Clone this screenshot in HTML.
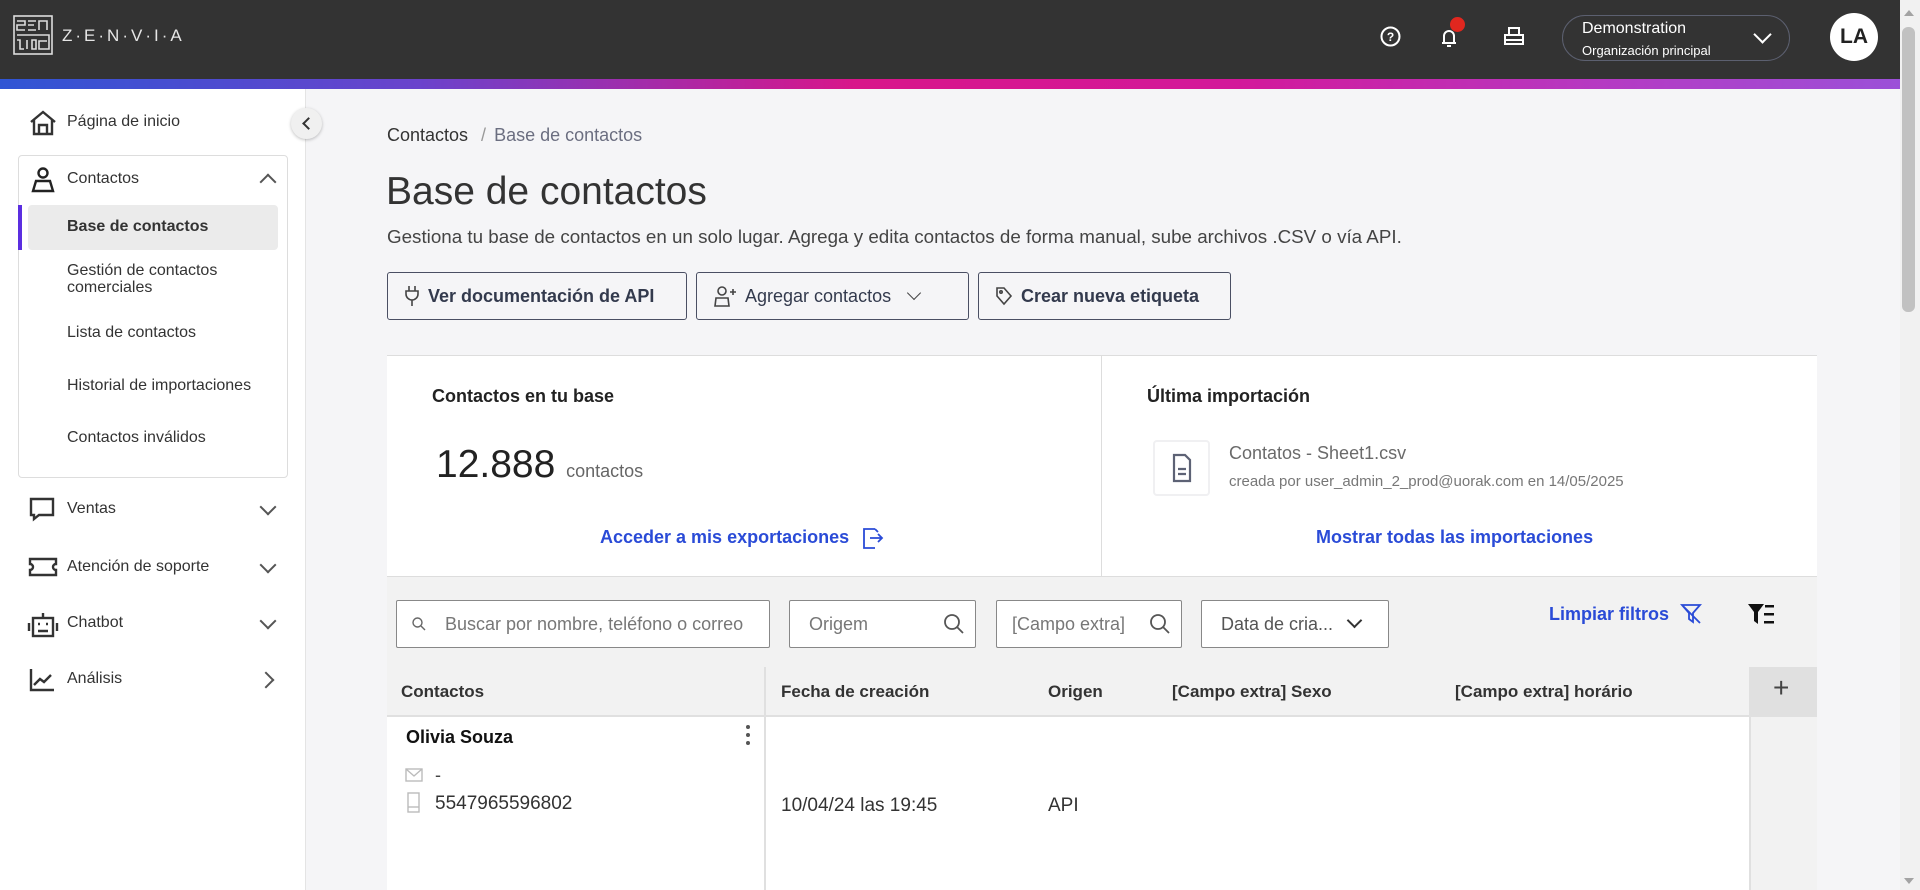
<!DOCTYPE html>
<html><head><meta charset="utf-8">
<style>
*{box-sizing:border-box;margin:0;padding:0}
body{width:1920px;height:890px;overflow:hidden;font-family:"Liberation Sans",sans-serif;background:#f5f5f7;position:relative;color:#222}
.abs{position:absolute}
.hdr{left:0;top:0;width:1900px;height:79px;background:#333}
.grad{left:0;top:79px;width:1900px;height:10px;background:linear-gradient(90deg,#2f55d4 0%,#6a43cc 22%,#d8168a 45%,#d3189a 65%,#b43bc4 85%,#9b50d8 100%)}
.side{left:0;top:89px;width:306px;height:801px;background:#fff;border-right:1px solid #e4e4e4}
.nav{position:absolute;left:67px;font-size:16px;color:#333}
.chev{position:absolute;width:10px;height:10px;border-right:2px solid #555;border-bottom:2px solid #555}
.btn{position:absolute;top:272px;height:48px;border:1px solid #4a4f63;border-radius:3px;background:#f5f5f7;font-size:18px;font-weight:bold;color:#333a4d;display:flex;align-items:center;padding-left:16px;gap:8px}
.inp{position:absolute;top:600px;height:48px;border:1px solid #888;background:#fff;border-radius:2px;font-size:18px;color:#666;display:flex;align-items:center}
.th{position:absolute;top:682px;font-size:17px;font-weight:bold;color:#333}
</style></head><body>
<div class="abs hdr"></div>
<div class="abs grad"></div>
<svg class="abs" style="left:13px;top:15px" width="40" height="40" viewBox="0 0 40 40" fill="none" stroke="#ddd" stroke-width="1.6"><rect x="1" y="1" width="38" height="38"/><path d="M4 6h8v4H4v5h8M15 6h8M15 10h6M15 15h8M26 15V6h8v9M4 20h32v14H26v-8h8M4 25h3v9h4M14 25v9M19 25h4v9h-4z"/></svg>
<div class="abs" style="left:62px;top:26px;font-size:17px;letter-spacing:3px;color:#e6e6e6">Z·E·N·V·I·A</div>
<svg class="abs" style="left:1380px;top:26px" width="21" height="21" viewBox="0 0 21 21"><circle cx="10.5" cy="10.5" r="9" fill="none" stroke="#fff" stroke-width="2"/><text x="10.5" y="15" font-size="12" font-weight="bold" fill="#fff" text-anchor="middle" font-family="Liberation Sans">?</text></svg>
<svg class="abs" style="left:1438px;top:24px" width="26" height="26" viewBox="0 0 26 26" fill="none" stroke="#fff" stroke-width="2"><path d="M4 19h14M6 19v-7a5 5 0 0110 0v7M9 22h4"/></svg>
<div class="abs" style="left:1450px;top:17px;width:15px;height:15px;border-radius:50%;background:#e0271f"></div>
<svg class="abs" style="left:1503px;top:25px" width="22" height="22" viewBox="0 0 22 22" fill="none" stroke="#fff" stroke-width="2"><path d="M6 10V3h10v7M2 10h18v5H2zM2 15v4h18v-4"/></svg>
<div class="abs" style="left:1562px;top:15px;width:228px;height:46px;border:1px solid #5c6070;border-radius:23px"></div>
<div class="abs" style="left:1582px;top:20px;font-size:16px;color:#fff">Demonstration</div>
<div class="abs" style="left:1582px;top:43px;font-size:13px;color:#fff">Organización principal</div>
<div class="chev" style="left:1756px;top:28px;width:13px;height:13px;border-color:#fff;transform:rotate(45deg)"></div>
<div class="abs" style="left:1830px;top:13px;width:48px;height:48px;border-radius:50%;background:#fff;color:#222;font-size:21px;font-weight:bold;text-align:center;line-height:48px">LA</div>
<div class="abs" style="left:1900px;top:0;width:20px;height:890px;background:#f1f1f1"></div>
<div class="abs" style="left:1902px;top:27px;width:13px;height:285px;background:#c1c1c1;border-radius:6px"></div>
<div class="abs" style="left:1904px;top:10px;border:5px solid transparent;border-bottom:6px solid #a3a3a3;border-top:0"></div>
<div class="abs" style="left:1904px;top:878px;border:5px solid transparent;border-top:6px solid #a3a3a3;border-bottom:0"></div>
<div class="abs side"></div>
<svg class="abs" style="left:29px;top:110px" width="28" height="26" viewBox="0 0 28 26" fill="none" stroke="#333" stroke-width="2.4"><path d="M2 12L14 2l12 10M5 10v14h18V10M10 24v-9h8v9"/></svg>
<div class="nav" style="top:113px">Página de inicio</div>
<div class="abs" style="left:291px;top:108px;width:31px;height:31px;border-radius:50%;background:#f0f0f0;box-shadow:0 1px 3px rgba(0,0,0,.25)"></div>
<div class="chev" style="left:304px;top:119px;width:9px;height:9px;border-color:#333;transform:rotate(135deg)"></div>
<div class="abs" style="left:18px;top:155px;width:270px;height:323px;border:1px solid #ddd;border-radius:4px"></div>
<svg class="abs" style="left:31px;top:167px" width="24" height="26" viewBox="0 0 24 26" fill="none" stroke="#222" stroke-width="2.4"><circle cx="12" cy="6" r="4.5"/><path d="M5 14h14l3 10H2z"/></svg>
<div class="nav" style="top:170px">Contactos</div>
<div class="chev" style="left:262px;top:176px;border-color:#555;transform:rotate(-135deg);width:12px;height:12px"></div>
<div class="abs" style="left:28px;top:205px;width:250px;height:45px;background:#ebebeb;border-radius:4px"></div>
<div class="abs" style="left:18px;top:205px;width:4px;height:45px;background:#5b2ee0"></div>
<div class="nav" style="top:218px;font-weight:bold">Base de contactos</div>
<div class="nav" style="top:262px;line-height:17px">Gestión de contactos<br>comerciales</div>
<div class="nav" style="top:324px">Lista de contactos</div>
<div class="nav" style="top:377px">Historial de importaciones</div>
<div class="nav" style="top:429px">Contactos inválidos</div>
<svg class="abs" style="left:29px;top:497px" width="26" height="26" viewBox="0 0 26 26" fill="none" stroke="#333" stroke-width="2.4"><path d="M2 2h22v16H10l-5 4v-4H2z"/></svg>
<div class="nav" style="top:500px">Ventas</div>
<svg class="abs" style="left:28px;top:557px" width="30" height="20" viewBox="0 0 30 20" fill="none" stroke="#333" stroke-width="2.4"><path d="M2 2h26v5a3 3 0 000 6v5H2v-5a3 3 0 000-6z"/></svg>
<div class="nav" style="top:558px">Atención de soporte</div>
<svg class="abs" style="left:27px;top:612px" width="32" height="26" viewBox="0 0 32 26" fill="none" stroke="#333" stroke-width="2.4"><rect x="6" y="6" width="20" height="18"/><path d="M16 1v5M2 11v8M30 11v8M11 12h2M19 12h2M11 19h10"/></svg>
<div class="nav" style="top:614px">Chatbot</div>
<svg class="abs" style="left:29px;top:668px" width="26" height="24" viewBox="0 0 26 24" fill="none" stroke="#333" stroke-width="2.4"><path d="M2 1v21h23M5 17l6-6 4 3 7-7"/></svg>
<div class="nav" style="top:670px">Análisis</div>
<div class="chev" style="left:262px;top:501px;transform:rotate(45deg);width:12px;height:12px;border-color:#555"></div>
<div class="chev" style="left:262px;top:559px;transform:rotate(45deg);width:12px;height:12px;border-color:#555"></div>
<div class="chev" style="left:262px;top:615px;transform:rotate(45deg);width:12px;height:12px;border-color:#555"></div>
<div class="chev" style="left:260px;top:674px;transform:rotate(-45deg);width:12px;height:12px;border-color:#555"></div>
<div class="abs" style="left:387px;top:125px;font-size:18px;color:#333">Contactos <span style="color:#999;margin:0 8px">/</span><span style="color:#6b6e80">Base de contactos</span></div>
<div class="abs" style="left:386px;top:170px;font-size:39px;color:#333">Base de contactos</div>
<div class="abs" style="left:387px;top:226px;font-size:18.8px;color:#444">Gestiona tu base de contactos en un solo lugar. Agrega y edita contactos de forma manual, sube archivos .CSV o vía API.</div>
<div class="btn" style="left:387px;width:300px"><svg width="16" height="22" viewBox="0 0 16 22" fill="none" stroke="#444" stroke-width="1.6"><path d="M5 1v5M11 1v5M2 6h12v3a6 6 0 01-12 0zM8 15v6"/></svg>Ver documentación de API</div>
<div class="btn" style="left:696px;width:273px;font-weight:normal"><svg width="24" height="22" viewBox="0 0 24 22" fill="none" stroke="#444" stroke-width="1.6"><circle cx="9" cy="6" r="4"/><path d="M3 13h12l1 8H2zM17 7h6M20 4v6"/></svg>Agregar contactos <span class="chev" style="position:relative;display:inline-block;margin-left:10px;top:-3px;transform:rotate(45deg);border-width:0 1.6px 1.6px 0;border-color:#444"></span></div>
<div class="btn" style="left:978px;width:253px"><svg width="18" height="20" viewBox="0 0 18 20" fill="none" stroke="#444" stroke-width="1.6"><path d="M2 2h7l7 8-7 8-7-8z"/><circle cx="6" cy="6" r="1.2"/></svg>Crear nueva etiqueta</div>
<div class="abs" style="left:387px;top:355px;width:1430px;height:222px;background:#fff;border-top:1px solid #ddd;border-bottom:1px solid #ddd"></div>
<div class="abs" style="left:1101px;top:355px;width:1px;height:222px;background:#ddd"></div>
<div class="abs" style="left:432px;top:386px;font-size:18px;font-weight:bold;color:#222">Contactos en tu base</div>
<div class="abs" style="left:436px;top:443px;font-size:39px;color:#222">12.888 <span style="font-size:18px;color:#666">contactos</span></div>
<div class="abs" style="left:600px;top:527px;font-size:18px;font-weight:bold;color:#2a4bd7">Acceder a mis exportaciones</div>
<svg class="abs" style="left:862px;top:526px" width="22" height="24" viewBox="0 0 22 24" fill="none" stroke="#2a4bd7" stroke-width="1.8"><path d="M13 3H2v19h11M8 12h12M16 8l4 4-4 4M13 3l3 3"/></svg>
<div class="abs" style="left:1147px;top:386px;font-size:18px;font-weight:bold;color:#222">Última importación</div>
<div class="abs" style="left:1153px;top:440px;width:57px;height:56px;border:2px solid #f0f0f2;border-radius:4px;background:#fff"></div>
<svg class="abs" style="left:1172px;top:453px" width="20" height="30" viewBox="0 0 20 30" fill="none" stroke="#5d6275" stroke-width="2.2"><path d="M2 2h11l5 5v21H2zM6 16h8M6 21h8"/></svg>
<div class="abs" style="left:1229px;top:443px;font-size:18px;color:#6a6a6a">Contatos - Sheet1.csv</div>
<div class="abs" style="left:1229px;top:473px;font-size:15px;color:#777">creada por user_admin_2_prod@uorak.com en 14/05/2025</div>
<div class="abs" style="left:1316px;top:527px;font-size:18px;font-weight:bold;color:#2a4bd7">Mostrar todas las importaciones</div>
<div class="abs" style="left:387px;top:577px;width:1430px;height:90px;background:#f2f2f2"></div>
<div class="inp" style="left:396px;width:374px;padding-left:14px"><svg width="16" height="16" viewBox="0 0 16 16" fill="none" stroke="#666" stroke-width="1.4"><circle cx="6.5" cy="6.5" r="4.5"/><path d="M10 10l4 4"/></svg><span style="margin-left:18px;color:#777;white-space:nowrap;overflow:hidden;width:320px">Buscar por nombre, teléfono o correo</span></div>
<div class="inp" style="left:789px;width:187px;padding-left:19px;justify-content:space-between;padding-right:10px"><span style="color:#777">Origem</span><svg width="22" height="22" viewBox="0 0 22 22" fill="none" stroke="#555" stroke-width="1.8"><circle cx="9" cy="9" r="7"/><path d="M14 14l6 6"/></svg></div>
<div class="inp" style="left:996px;width:186px;padding-left:15px;justify-content:space-between;padding-right:10px"><span style="color:#777">[Campo extra]</span><svg width="22" height="22" viewBox="0 0 22 22" fill="none" stroke="#555" stroke-width="1.8"><circle cx="9" cy="9" r="7"/><path d="M14 14l6 6"/></svg></div>
<div class="inp" style="left:1201px;width:188px;padding-left:19px;color:#555">Data de cria... <span class="chev" style="position:relative;display:inline-block;margin-left:16px;top:-4px;transform:rotate(45deg);width:11px;height:11px;border-color:#333"></span></div>
<div class="abs" style="left:1549px;top:604px;font-size:18px;font-weight:bold;color:#2a4bd7">Limpiar filtros</div>
<svg class="abs" style="left:1680px;top:603px" width="22" height="22" viewBox="0 0 22 22" fill="none" stroke="#2a4bd7" stroke-width="1.8"><path d="M2 2h18l-7 8v9l-4-3v-6zM3 3l17 17"/></svg>
<svg class="abs" style="left:1747px;top:603px" width="30" height="24" viewBox="0 0 30 24" fill="#111"><path d="M1 1h16l-6 8v12l-4-3V9z"/><rect x="18" y="2" width="9" height="2.5"/><rect x="17" y="10" width="10" height="2.5"/><rect x="17" y="18" width="10" height="2.5"/></svg>
<div class="abs" style="left:387px;top:667px;width:1430px;height:50px;background:#f2f2f2;border-bottom:2px solid #e0e0e0"></div>
<div class="abs" style="left:387px;top:717px;width:1362px;height:173px;background:#fff"></div>
<div class="abs" style="left:764px;top:667px;width:2px;height:223px;background:#e0e0e0"></div>
<div class="abs" style="left:1749px;top:667px;width:68px;height:50px;background:#e0e0e0"></div>
<div class="abs" style="left:1749px;top:717px;width:68px;height:173px;background:#f2f2f2;border-left:2px solid #e0e0e0"></div>
<div class="abs" style="left:1773px;top:672px;font-size:28px;color:#444;font-weight:300">+</div>
<div class="th" style="left:401px">Contactos</div>
<div class="th" style="left:781px">Fecha de creación</div>
<div class="th" style="left:1048px">Origen</div>
<div class="th" style="left:1172px">[Campo extra] Sexo</div>
<div class="th" style="left:1455px">[Campo extra] horário</div>
<div class="abs" style="left:406px;top:727px;font-size:18px;font-weight:bold;color:#111">Olivia Souza</div>
<div class="abs" style="left:746px;top:725px;width:4px;height:4px;border-radius:50%;background:#555;box-shadow:0 8px 0 #555,0 16px 0 #555"></div>
<svg class="abs" style="left:405px;top:768px" width="18" height="14" viewBox="0 0 18 14" fill="none" stroke="#bbb" stroke-width="1.4"><rect x="1" y="1" width="16" height="12"/><path d="M1 1l8 7 8-7"/></svg>
<div class="abs" style="left:435px;top:765px;font-size:18px;color:#444">-</div>
<svg class="abs" style="left:407px;top:792px" width="13" height="21" viewBox="0 0 13 21" fill="none" stroke="#bbb" stroke-width="1.4"><rect x="1" y="1" width="11" height="19"/><path d="M1 15h11"/></svg>
<div class="abs" style="left:435px;top:793px;font-size:19px;color:#333">5547965596802</div>
<div class="abs" style="left:781px;top:795px;font-size:19px;color:#333">10/04/24 las 19:45</div>
<div class="abs" style="left:1048px;top:795px;font-size:19px;color:#333">API</div>
</body></html>
